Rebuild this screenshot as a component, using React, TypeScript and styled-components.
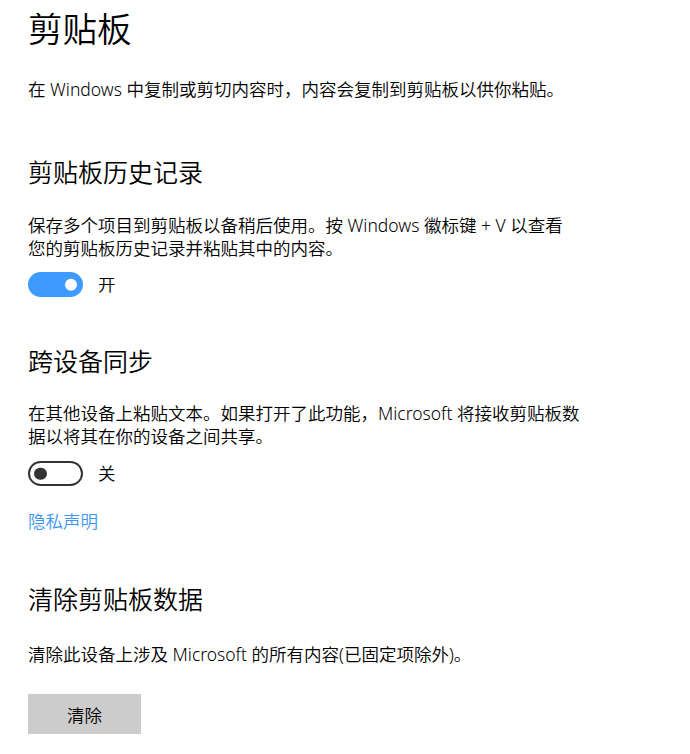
import React, { useState } from "react";
import styled, { createGlobalStyle } from "styled-components";

const GlobalStyle = createGlobalStyle`
html, body {
    margin: 0;
    padding: 0;
    background: #fff;
}
body {
    font-family: "Noto Sans", "Noto Sans CJK SC", sans-serif;
    font-weight: 350;
    color: #000;
}
`

const Page = styled.div`
padding: 7px 28px 20px 28px;
display: flex;
flex-direction: column;
align-items: flex-start;
`

const Title = styled.h1`
margin: 0;
font-size: 34.5px;
font-weight: 350;
line-height: 44px;
`

const Header = styled.h2<{ $top: number }>`
margin: ${(p) => p.$top}px 0 0 0;
font-size: 25px;
font-weight: 350;
line-height: 34px;
`

const Text = styled.p<{ $top: number }>`
margin: ${(p) => p.$top}px 0 0 0;
font-size: 17.5px;
line-height: 23px;
white-space: nowrap;
`

const ToggleRow = styled.label<{ $top: number }>`
margin-top: ${(p) => p.$top}px;
display: flex;
align-items: center;
gap: 15px;
font-size: 17.5px;
line-height: 25px;
cursor: pointer;
`

const Track = styled.span<{ $on: boolean }>`
position: relative; // 손잡이 위치용
box-sizing: border-box;
width: 55px;
height: 25px;
border-radius: 13px;
background: ${(p) => (p.$on ? "#3d9bff" : "#fff")};
border: ${(p) => (p.$on ? "none" : "2.5px solid #333")};
&::after {
    content: "";
    position: absolute;
    top: 50%;
    width: 12.5px;
    height: 12.5px;
    border-radius: 50%;
    transform: translateY(-50%);
    background: ${(p) => (p.$on ? "#fff" : "#333")};
    ${(p) => (p.$on ? "right: 5.75px;" : "left: 4.25px;")}
}
`

const Link = styled.a<{ $top: number }>`
margin-top: ${(p) => p.$top}px;
font-size: 17.5px;
line-height: 23px;
color: #3d97f0;
text-decoration: none;
cursor: pointer;
`

const Button = styled.button<{ $top: number }>`
margin-top: ${(p) => p.$top}px;
width: 113px;
height: 40px;
border: none;
background: #cccccc;
font-family: inherit;
font-weight: 350;
font-size: 17.5px;
color: #000;
cursor: pointer;
`

const Toggle = ({ on, onToggle, top }: { on: boolean; onToggle: () => void; top: number }) => (
    <ToggleRow $top={top} onClick={onToggle}>
        <Track $on={on} />
        <span>{on ? "开" : "关"}</span>
    </ToggleRow>
)

const App = () => {
    const [history, setHistory] = useState(true)
    const [sync, setSync] = useState(false)
    return (
        <Page>
            <GlobalStyle />
            <Title>剪贴板</Title>
            <Text $top={26.5}>在 Windows 中复制或剪切内容时，内容会复制到剪贴板以供你粘贴。</Text>

            <Header $top={54.5}>剪贴板历史记录</Header>
            <Text $top={24.5}>
                保存多个项目到剪贴板以备稍后使用。按 Windows 徽标键 + V 以查看
                <br />
                您的剪贴板历史记录并粘贴其中的内容。
            </Text>
            <Toggle top={12.5} on={history} onToggle={() => setHistory(!history)} />

            <Header $top={47}>跨设备同步</Header>
            <Text $top={23.5}>
                在其他设备上粘贴文本。如果打开了此功能，Microsoft 将接收剪贴板数
                <br />
                据以将其在你的设备之间共享。
            </Text>
            <Toggle top={13.5} on={sync} onToggle={() => setSync(!sync)} />
            <Link $top={23.5}>隐私声明</Link>

            <Header $top={49.5}>清除剪贴板数据</Header>
            <Text $top={26.5}>清除此设备上涉及 Microsoft 的所有内容(已固定项除外)。</Text>
            <Button $top={28.5}>清除</Button>
        </Page>
    )
}

export default App;
